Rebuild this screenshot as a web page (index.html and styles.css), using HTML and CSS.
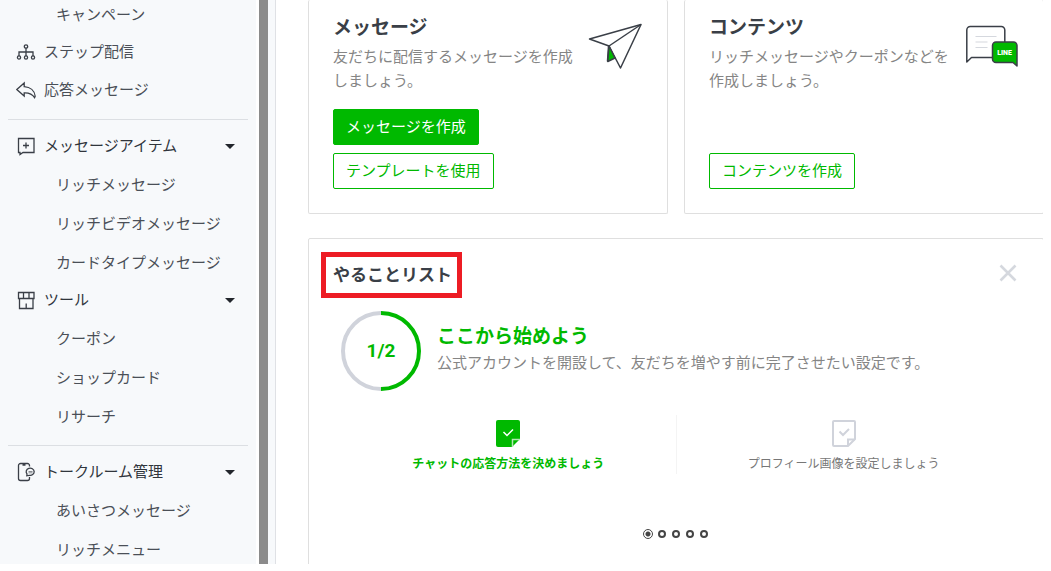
FILE: index.html
```html
<!DOCTYPE html>
<html lang="ja">
<head>
    <meta charset="UTF-8">
    <meta name="viewport" content="width=device-width, initial-scale=1.0">
    <title>ホーム</title>
    <link rel="stylesheet" href="styles.css">
</head>

<body>
    <div class="app">
        <!-- sidebar -->
        <nav class="sidebar">
            <ul class="menu sub">
                <li><a href="#">キャンペーン</a></li>
            </ul>
            <a class="menu-link" href="#">
                <svg class="menu-icon" viewBox="0 0 20 20">
                    <circle cx="10" cy="4.5" r="1.7"/>
                    <path d="M10 6.2V14M3 14v-4h14v4"/>
                    <circle cx="3" cy="15.5" r="1.6"/>
                    <circle cx="10" cy="15.5" r="1.6"/>
                    <circle cx="17" cy="15.5" r="1.6"/>
                </svg>
                ステップ配信
            </a>
            <a class="menu-link" href="#">
                <svg class="menu-icon" viewBox="0 0 20 20">
                    <path d="M.8 9.6L8.2 3v3.6c6 .4 10.4 4 11 9.600l-.6 1.400c-2.200-3.600-5.400-5-10.400-4.800v3.200z"/>
                </svg>
                応答メッセージ
            </a>

            <hr class="divider">

            <button class="menu-link menu-head" type="button">
                <svg class="menu-icon" viewBox="0 0 20 20">
                    <path d="M2.500 2.500h15.500v14H7l-3 2v-2H2.500zM10 6.500v6M7 9.500h6"/>
                </svg>
                メッセージアイテム
                <span class="caret"></span>
            </button>
            <ul class="menu sub">
                <li><a href="#">リッチメッセージ</a></li>
                <li><a href="#">リッチビデオメッセージ</a></li>
                <li><a href="#">カードタイプメッセージ</a></li>
            </ul>
            <button class="menu-link menu-head" type="button">
                <svg class="menu-icon" viewBox="0 0 20 20">
                    <path d="M2.500 2.500h15.500v6H2.500zM7.500 2.500v6M13 2.500v6M3.500 8.500v10h13.500v-10M10.200 13.500v5"/>
                </svg>
                ツール
                <span class="caret"></span>
            </button>
            <ul class="menu sub">
                <li><a href="#">クーポン</a></li>
                <li><a href="#">ショップカード</a></li>
                <li><a href="#">リサーチ</a></li>
            </ul>

            <hr class="divider">

            <button class="menu-link menu-head" type="button">
                <svg class="menu-icon" viewBox="0 0 20 20">
                    <path d="M13.500 4.500v-1a2 2 0 0 0-2-2h-7a2 2 0 0 0-2 2v13a2 2 0 0 0 2 2h7a2 2 0 0 0 2-2v-1.500M6.500 3h3"/>
                    <path d="M10.800 13.800l.2-1.800a4 3.600 0 1 1 2.200 1.300z"/>
                    <path d="M12.500 9.500h4M12.500 10.800h4" stroke-width=".6"/>
                </svg>
                トークルーム管理
                <span class="caret"></span>
            </button>
            <ul class="menu sub">
                <li><a href="#">あいさつメッセージ</a></li>
                <li><a href="#">リッチメニュー</a></li>
            </ul>
        </nav>
        <div class="scrollbar"></div>

        <!-- main -->
        <main class="main">
            <div class="content">
                <section class="card">
                    <div class="card-top">
                        <div class="card-text">
                            <h2>メッセージ</h2>
                            <p>友だちに配信するメッセージを作成しましょう。</p>
                        </div>
                        <svg class="card-icon" viewBox="0 0 56 52" fill="none" stroke="#3a3f47" stroke-width="1.500" stroke-linejoin="round">
                            <path d="M21.500 25.500L20.500 40l6.500-4.500z" fill="#00b900"/>
                            <path d="M2.500 18L54 3.500 33.500 47 22 25z" fill="#fff"/>
                            <path d="M22 25L20.800 40.500 28 37z" fill="#00b900"/>
                            <path d="M22 25L54 3.500"/>
                        </svg>
                    </div>
                    <div class="card-buttons">
                        <button class="button primary" type="button">メッセージを作成</button>
                        <button class="button" type="button">テンプレートを使用</button>
                    </div>
                </section>

                <section class="card">
                    <div class="card-top">
                        <div class="card-text">
                            <h2>コンテンツ</h2>
                            <p>リッチメッセージやクーポンなどを作成しましょう。</p>
                        </div>
                        <svg class="card-icon" viewBox="0 0 56 52" fill="none" stroke="#3a3f47" stroke-width="1.500" stroke-linejoin="round">
                            <path d="M3.800 41V9a3.500 3.500 0 0 1 3.500-3.500h31a3.500 3.500 0 0 1 3.500 3.500v27.500H8.500z" fill="#fff"/>
                            <path d="M12.500 15.500h21M12.500 21h12M12.500 26.500h12" stroke="#d5d8de" stroke-width="1.200"/>
                            <path d="M33 21h17.500a3.500 3.500 0 0 1 3.500 3.500V45L50 41.500H33a3.500 3.500 0 0 1-3.500-3.500V24.500A3.500 3.500 0 0 1 33 21z" fill="#00b900"/>
                            <text class="line-text" x="41.500" y="34" text-anchor="middle">LINE</text>
                        </svg>
                    </div>
                    <div class="card-buttons">
                        <button class="button" type="button">コンテンツを作成</button>
                    </div>
                </section>

                <section class="card todo">
                    <div class="todo-head">
                        <h2 class="marked">やることリスト</h2>
                        <button class="close" type="button" aria-label="閉じる">
                            <svg viewBox="0 0 24 24" fill="none" stroke="#d5d8de" stroke-width="2.600">
                                <path d="M5.500 5.500l15 15M20.500 5.500l-15 15"/>
                            </svg>
                        </button>
                    </div>

                    <div class="progress">
                        <div class="ring">
                            <svg viewBox="0 0 80 80" fill="none" stroke-width="4">
                                <path d="M40 78A38 38 0 0 1 40 2" stroke="#d0d3db"/>
                                <path d="M40 2A38 38 0 0 1 40 78" stroke="#00b900"/>
                            </svg>
                            <span>1/2</span>
                        </div>
                        <div class="progress-text">
                            <h3>ここから始めよう</h3>
                            <p>公式アカウントを開設して、友だちを増やす前に完了させたい設定です。</p>
                        </div>
                    </div>

                    <div class="tasks">
                        <a class="task active" href="#">
                            <svg viewBox="0 0 24 28" fill="none">
                                <path d="M2 0h20q2 0 2 2v17l-8 8H2q-2 0-2-2V2q0-2 2-2z" fill="#00b900"/>
                                <path d="M16.500 27v-7.500H24" stroke="#b5e8b5" stroke-width="1.500"/>
                                <path d="M7.500 12l3.500 3.500 6-6" stroke="#fff" stroke-width="1.500"/>
                            </svg>
                            チャットの応答方法を決めましょう
                        </a>
                        <a class="task" href="#">
                            <svg viewBox="0 0 24 28" fill="none" stroke="#d0d3db" stroke-width="2">
                                <path d="M2 1h20q1 0 1 1v17l-7 7H2q-1 0-1-1V2q0-1 1-1z"/>
                                <path d="M16 26v-6.500h7"/>
                                <path d="M7.500 11.500l3.500 3.500 6-6"/>
                            </svg>
                            プロフィール画像を設定しましょう
                        </a>
                    </div>

                    <div class="dots">
                        <button class="dot current" type="button" aria-label="1"></button>
                        <button class="dot" type="button" aria-label="2"></button>
                        <button class="dot" type="button" aria-label="3"></button>
                        <button class="dot" type="button" aria-label="4"></button>
                        <button class="dot" type="button" aria-label="5"></button>
                    </div>
                </section>
            </div>
        </main>
    </div>
</body>
</html>
```
FILE: styles.css
```css
* {
    box-sizing: border-box;
}

body {
    font-family: Roboto, 'Noto Sans CJK JP', sans-serif;
    font-size: 15px;
    line-height: 24px;
    color: #4a4f57;
    background-color: #fff;
    margin: 0;
    padding: 0 8px 7px 0;
}

h2, h3, p, ul {
    margin: 0;
    padding: 0;
}

a {
    color: inherit;
    text-decoration: none;
}

button {
    font: inherit;
    color: inherit;
    background: none;
    border: none;
    padding: 0;
    cursor: pointer;
}

svg {
    display: block;
}

.app {
    display: flex;
    height: calc(100vh - 7px);
    overflow: hidden;
}

/* sidebar */
.sidebar {
    flex: none;
    width: 256px;
    margin-top: -5px;
    padding: 0 8px;
    background-color: #f7f9fb;
}

.menu {
    display: flex;
    flex-direction: column;
    gap: 1px;
    list-style: none;
}

.sub a {
    display: block;
    height: 38px;
    padding: 8px 0 0 48px;
}

.menu-link {
    display: flex;
    align-items: center;
    gap: 8px;
    width: 100%;
    height: 38px;
    padding: 0 13px 0 8px;
    text-align: left;
}

.menu-head {
    color: #30353c;
}

.menu-icon {
    width: 20px;
    height: 20px;
    fill: none;
    stroke: #3a3f47;
    stroke-width: 1.3;
}

.caret {
    margin-left: auto;
    border: 5px solid transparent;
    border-top-color: #22262c;
    border-bottom: none;
}

.divider {
    height: 1px;
    margin: 10px 0 7px;
    border: none;
    background-color: #dcdfe3;
}

.scrollbar {
    flex: none;
    width: 12px;
    border-left: 3px solid #fff;
    background-color: #8b8b8b;
}

/* main */
.main {
    flex: 1;
    min-width: 0;
    overflow: hidden;
    border-left: 7px solid #f7f9fb;
}

.content {
    display: grid;
    grid-template-columns: 1fr 1fr;
    gap: 24px 16px;
    margin-right: -1px;
    padding-left: 32px;
    border-left: 1px solid #dfe1e5;
}

.card {
    display: flex;
    flex-direction: column;
    padding: 14px 24px 24px;
    border: 1px solid #dfdfdf;
    border-radius: 2px;
}

.card:not(.todo) {
    border-top: none;
}

.card-top {
    display: flex;
    justify-content: space-between;
}

.card-text {
    width: 242px;
}

.card h2,
.card h3 {
    font-size: 19px;
    font-weight: 700;
    line-height: 28px;
    color: #3a3f47;
}

.card p {
    color: #858585;
}

.card-text p {
    margin-top: 3px;
}

.card-icon {
    flex: none;
    width: 56px;
    height: 52px;
    margin-top: 7px;
}

.line-text {
    font-size: 7px;
    font-weight: 900;
    fill: #fff;
    stroke: none;
}

.card-buttons {
    display: flex;
    flex-direction: column;
    align-items: flex-start;
    gap: 8px;
    margin-top: auto;
    padding-top: 16px;
}

.button {
    height: 36px;
    padding: 0 12px;
    border: 1px solid #00b900;
    border-radius: 2px;
    color: #00b900;
}

.button.primary {
    background-color: #00b900;
    color: #fff;
}

/* todo list */
.todo {
    grid-column: 1 / -1;
    padding-top: 13px;
    padding-bottom: 40px;
}

.todo-head {
    display: flex;
    justify-content: space-between;
    align-items: flex-start;
}

.todo .marked {
    margin-left: -12px;
    padding: 0 5px 0 7px;
    border: 5px solid #ed1c24;
    font-size: 17px;
    line-height: 36px;
}

.close {
    width: 24px;
    height: 24px;
    margin-top: 8px;
}

.progress {
    display: flex;
    gap: 16px;
    margin-top: 13px;
    padding-left: 8px;
}

.ring {
    display: grid;
    flex: none;
    width: 80px;
    height: 80px;
}

.ring svg,
.ring span {
    grid-area: 1 / 1;
}

.ring span {
    place-self: center;
    font-size: 19px;
    font-weight: 700;
    color: #00b900;
}

.progress-text {
    padding-top: 12px;
}

.progress-text h3 {
    color: #00b900;
}

.tasks {
    display: flex;
    margin-top: 24px;
    padding: 0 8px;
}

.task {
    flex: 1;
    display: flex;
    flex-direction: column;
    align-items: center;
    gap: 6px;
    padding-top: 5px;
    font-size: 12px;
    line-height: 20px;
    color: #777;
}

.task + .task {
    border-left: 1px solid #f4f4f4;
}

.task svg {
    width: 24px;
    height: 28px;
}

.task.active {
    font-weight: 700;
    color: #00b900;
}

.dots {
    display: flex;
    justify-content: center;
    align-items: center;
    gap: 6px;
    height: 10px;
    margin-top: 55px;
}

.dot {
    width: 8px;
    height: 8px;
    border: 2px solid #444;
    border-radius: 50%;
}

.dot.current {
    width: 10px;
    height: 10px;
    margin: 0 -1px;
    border-width: 1px;
    background: radial-gradient(#444 2px, #fff 3px);
}
```
